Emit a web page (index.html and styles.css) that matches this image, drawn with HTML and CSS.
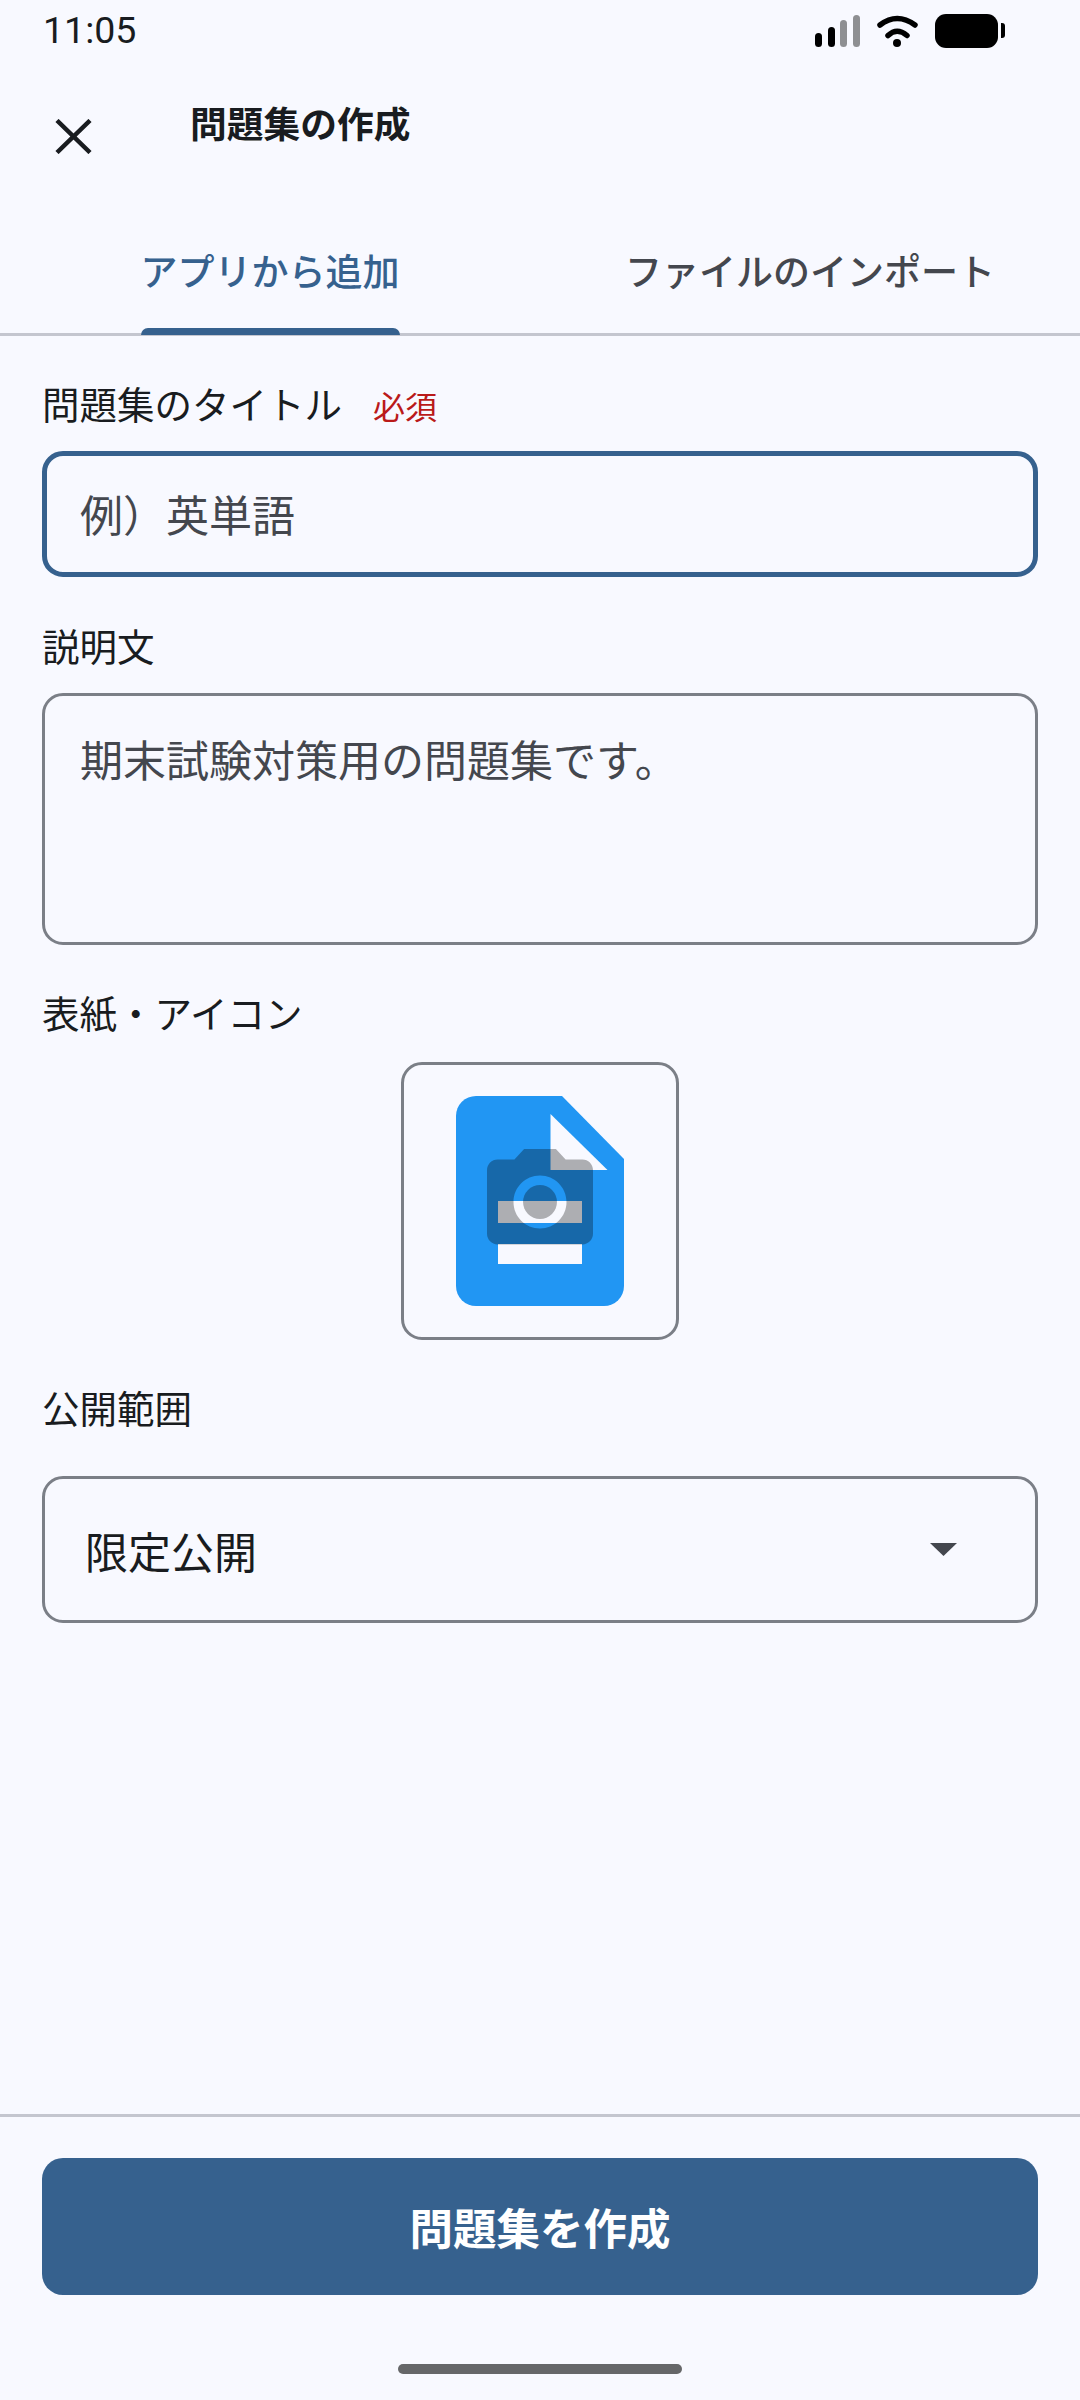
FILE: index.html
```html
<!DOCTYPE html>
<html lang="ja">
<head>
  <meta charset="UTF-8" />
  <meta name="viewport" content="width=device-width, initial-scale=1.0" />
  <title>問題集の作成</title>
  <link rel="stylesheet" href="styles.css">
</head>
<body>
  <!-- Status bar -->
  <div class="status-bar">
    <span class="status-time">11:05</span>
    <svg class="status-icons" width="190" height="34" viewBox="0 0 190 34">
      <rect x="0" y="19" width="7" height="14" rx="3.5" fill="#000" />
      <rect x="13" y="13" width="7" height="20" rx="3.5" fill="#000" />
      <rect x="25" y="6" width="7" height="27" rx="3.5" fill="#8e8f92" />
      <rect x="38" y="1" width="7" height="32" rx="3.5" fill="#8e8f92" />
      <path d="M65 11Q82 -2 100 11" fill="none" stroke="#000" stroke-width="5.5" stroke-linecap="round" />
      <path d="M73 21.5Q82 13 92 21.5" fill="none" stroke="#000" stroke-width="5.5" stroke-linecap="round" />
      <circle cx="82" cy="29" r="4" fill="#000" />
      <rect x="120" y="0" width="63" height="34" rx="11" fill="#000" />
      <path d="M186 9h1a3 3 0 0 1 3 3v9a3 3 0 0 1 -3 3h-1z" fill="#000" />
    </svg>
  </div>

  <!-- Header -->
  <div class="app-bar">
    <svg class="close-icon" width="37" height="35" viewBox="0 0 37 35">
      <path d="M2 1.5L35 33.5M35 1.5L2 33.5" fill="none" stroke="#191c20" stroke-width="4.5" />
    </svg>
    <h1 class="app-title">問題集の作成</h1>
  </div>

  <!-- Tabs -->
  <div class="tabs">
    <div class="tab tab-active"><span class="tab-label">アプリから追加</span></div>
    <div class="tab"><span class="tab-label">ファイルのインポート</span></div>
  </div>

  <!-- Form -->
  <form class="form">
    <div class="field field-title">
      <label class="field-label">問題集のタイトル<span class="required">必須</span></label>
      <input class="text-input text-input-focus" type="text" placeholder="例）英単語">
    </div>

    <div class="field field-desc">
      <label class="field-label">説明文</label>
      <textarea class="text-input text-area" placeholder="期末試験対策用の問題集です。"></textarea>
    </div>

    <div class="field field-cover">
      <label class="field-label">表紙・アイコン</label>
      <div class="cover-box">
        <svg width="168" height="210" viewBox="0 0 168 210">
          <path d="M20 0H106L168 63V190a20 20 0 0 1 -20 20H20a20 20 0 0 1 -20 -20V20a20 20 0 0 1 20 -20z" fill="#2196f3" />
          <path d="M94.5 18L151.5 74H94.5z" fill="#f8f9ff" />
          <rect x="42" y="105" width="84" height="22" fill="#f8f9ff" />
          <rect x="42" y="148" width="84" height="20" fill="#f8f9ff" />
          <g transform="translate(20.4 42.4) scale(5.3)" fill="#000" fill-opacity="0.3">
            <path fill-rule="evenodd" d="M9 2L7.17 4H4c-1.1 0-2 .9-2 2v12c0 1.1.9 2 2 2h16c1.1 0 2-.9 2-2V6c0-1.1-.9-2-2-2h-3.17L15 2H9zm3 15c-2.76 0-5-2.24-5-5s2.24-5 5-5 5 2.24 5 5-2.24 5-5 5z" />
            <circle cx="12" cy="12" r="3.2" />
          </g>
        </svg>
      </div>
    </div>

    <div class="field field-scope">
      <label class="field-label">公開範囲</label>
      <div class="select-box">
        <span>限定公開</span>
        <svg width="27" height="13" viewBox="0 0 27 13">
          <path d="M0 0H27L13.5 13z" fill="#44474e" />
        </svg>
      </div>
    </div>
  </form>

  <!-- Footer -->
  <div class="footer">
    <button class="submit-btn" type="button">問題集を作成</button>
    <div class="home-bar"></div>
  </div>
</body>
</html>
```

FILE: styles.css
```css
* {
  box-sizing: border-box;
}

body {
  margin: 0;
  width: 1080px;
  height: 2400px;
  display: flex;
  flex-direction: column;
  background: #f8f9ff;
  color: #191c20;
  font-family: Roboto, "Noto Sans CJK JP", sans-serif;
}

.status-bar {
  height: 62px;
  padding: 0 75px 0 43px;
  display: flex;
  justify-content: space-between;
  align-items: flex-start;
}

.status-time {
  font-size: 37.5px;
  line-height: 60px;
}

.status-icons {
  margin-top: 14px;
}

.app-bar {
  height: 168px;
  padding-left: 55px;
  display: flex;
  align-items: flex-start;
}

.close-icon {
  margin-top: 57px;
}

.app-title {
  margin: 37px 0 0 98px;
  font-size: 36.75px;
  font-weight: 700;
  line-height: 54px;
}

.tabs {
  height: 106px;
  display: flex;
  border-bottom: 3px solid #c4c6cf;
}

.tab {
  flex: 1;
  display: flex;
  justify-content: center;
  color: #44474e;
  font-size: 37px;
  font-weight: 500;
}

.tab-label {
  position: relative;
  height: 103px;
  line-height: 88px;
}

.tab-active {
  color: #36618e;
}

.tab-active .tab-label::after {
  content: "";
  position: absolute;
  left: 0;
  right: 0;
  bottom: -2px;
  height: 7px;
  background: #36618e;
  border-radius: 7px 7px 0 0;
}

.form {
  padding: 0 42px;
  display: flex;
  flex-direction: column;
}

.field {
  display: flex;
  flex-direction: column;
}

.field-title {
  margin-top: 43px;
}

.field-desc {
  margin-top: 44px;
}

.field-cover {
  margin-top: 43px;
}

.field-scope {
  margin-top: 43px;
}

.field-label {
  font-size: 37.5px;
  line-height: 54px;
  height: 54px;
}

.required {
  margin-left: 31px;
  color: #ba1a1a;
  font-size: 32px;
}

.text-input {
  display: block;
  width: 100%;
  height: 126px;
  margin-top: 18px;
  padding: 6px 35px 0;
  background: transparent;
  border: 3px solid #7b7f87;
  border-radius: 21px;
  color: #191c20;
  font-family: Roboto, "Noto Sans CJK JP", sans-serif;
  font-size: 43px;
  outline: none;
}

.text-input::placeholder {
  color: #44474e;
  opacity: 1;
}

.text-input-focus {
  border: 5.25px solid #36618e;
  padding: 6px 33px 0;
}

.text-area {
  height: 252px;
  padding: 36px 35px 0;
  line-height: 60px;
  resize: none;
}

.cover-box {
  width: 278px;
  height: 278px;
  margin: 20px auto 0;
  border: 3px solid #7b7f87;
  border-radius: 21px;
  display: flex;
  justify-content: center;
  align-items: center;
}

.select-box {
  height: 147px;
  margin-top: 39px;
  padding: 0 78px 0 40px;
  border: 3px solid #7b7f87;
  border-radius: 21px;
  display: flex;
  justify-content: space-between;
  align-items: center;
  font-size: 43px;
}

.footer {
  margin-top: auto;
  height: 286px;
  padding: 41px 42px 0;
  border-top: 3px solid #c4c6cf;
  display: flex;
  flex-direction: column;
  align-items: center;
}

.submit-btn {
  width: 100%;
  height: 137px;
  background: #36618e;
  color: #fff;
  border: none;
  border-radius: 21px;
  font-family: Roboto, "Noto Sans CJK JP", sans-serif;
  font-size: 43.5px;
  font-weight: 700;
}

.home-bar {
  width: 284px;
  height: 10px;
  margin-top: 69px;
  background: #666769;
  border-radius: 5px;
}
```
